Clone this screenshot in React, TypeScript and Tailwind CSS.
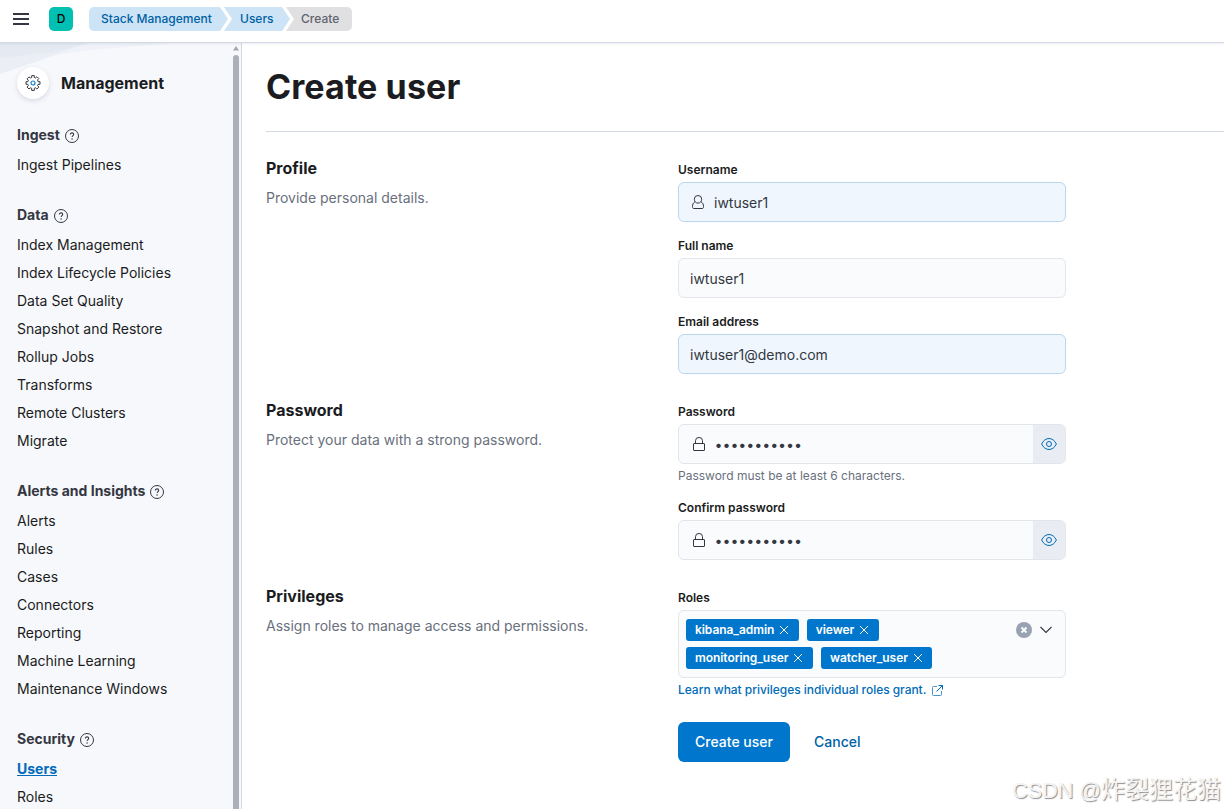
import type { ReactNode } from 'react'

const NAV = [
  { title: 'Ingest', items: ['Ingest Pipelines'] },
  {
    title: 'Data',
    items: [
      'Index Management',
      'Index Lifecycle Policies',
      'Data Set Quality',
      'Snapshot and Restore',
      'Rollup Jobs',
      'Transforms',
      'Remote Clusters',
      'Migrate',
    ],
  },
  {
    title: 'Alerts and Insights',
    items: ['Alerts', 'Rules', 'Cases', 'Connectors', 'Reporting', 'Machine Learning', 'Maintenance Windows'],
  },
  { title: 'Security', items: ['Users', 'Roles'] },
]

const ROLES = [
  ['kibana_admin', 'viewer'],
  ['monitoring_user', 'watcher_user'],
]

function HelpIcon() {
  return (
    <svg width="14" height="14" viewBox="0 0 14 14" fill="none" stroke="#343741" className="mt-[4px] shrink-0">
      <circle cx="7" cy="7" r="6.5" strokeWidth="1" />
      <path d="M5.3 5.6C5.3 4.5 6 3.9 7 3.9s1.7.6 1.7 1.5c0 1.2-1.6 1.3-1.6 2.6" strokeWidth="1.1" />
      <circle cx="7.05" cy="9.9" r=".75" fill="#343741" stroke="none" />
    </svg>
  )
}

function GearIcon() {
  return (
    <svg width="16" height="16" viewBox="0 0 16 16" fill="none">
      <path
        d="M6.7.6h2.6v1.8l1.3.5 1.3-1.2 1.9 1.9-1.2 1.3.5 1.8h1.9v2.6h-1.9l-.5 1.3 1.2 1.5-1.9 1.9-1.4-1.2-1.2.5v2.1H6.7v-2.1l-1.3-.5L4 14l-1.9-1.9 1.2-1.5-.5-1.3H1V6.700h1.800l.5-1.400-1.200-1.500L4 1.900 5.400 3l1.300-.5z"
        stroke="#343741"
      />
      <circle cx="8" cy="8" r="2" stroke="#0b83d9" strokeWidth="1.2" />
    </svg>
  )
}

function UserIcon() {
  return (
    <svg width="14" height="16" viewBox="0 0 14 16" fill="none" stroke="#343741">
      <path d="M3.300 5.200a3.700 3.700 0 0 1 7.400 0c0 2.300-1.600 3.900-3.700 3.900S3.300 7.500 3.300 5.200z" />
      <path d="M3.900 7.900C2.200 8.900 1.500 10.300 1.500 12.600c0 1.300.3 1.900 1 1.900h9c.7 0 1-.6 1-1.900 0-2.300-.7-3.700-2.400-4.700" />
    </svg>
  )
}

function LockIcon() {
  return (
    <svg width="14" height="16" viewBox="0 0 14 16" fill="none" stroke="#343741">
      <rect x="1.500" y="7.500" width="11" height="7" rx=".5" />
      <path d="M3.500 7.500V4.700A3.300 3.300 0 0 1 7 1.500a3.300 3.300 0 0 1 3.500 3.200v2.800" />
    </svg>
  )
}

function EyeIcon() {
  return (
    <svg width="16" height="16" viewBox="0 0 16 16" fill="none" stroke="#006bb8">
      <path d="M.6 8C2.300 4.500 5 2.500 8 2.500S13.700 4.500 15.400 8C13.700 11.500 11 13.500 8 13.500S2.300 11.500.6 8z" />
      <circle cx="8" cy="8" r="2.500" />
    </svg>
  )
}

function CrossIcon() {
  return (
    <svg width="10" height="10" viewBox="0 0 10 10" stroke="#ffffff" strokeWidth="1">
      <path d="M1 1l8 8M9 1L1 9" />
    </svg>
  )
}

function Header() {
  return (
    <header className="relative z-10 flex h-[43px] shrink-0 items-center border-b border-[#d3dae6] bg-white pb-[4px] pl-[13px] shadow-[0_1px_2px_rgba(90,110,150,0.12)]">
      <svg width="16" height="12" viewBox="0 0 16 12" fill="#343741">
        <path d="M0 0h16v2H0zM0 5h16v2H0zM0 10h16v2H0z" />
      </svg>
      <div className="ml-5 flex h-6 w-6 items-center justify-center rounded-[5px] bg-[#00bfb3] text-[12px] font-medium text-black">D</div>
      <nav className="ml-4 flex h-6 text-[12px] font-medium leading-6">
        <a className="w-[139px] rounded-l-[5px] bg-[#cce4f5] pl-3 text-[#0061a6] [clip-path:polygon(0_0,131px_0,100%_50%,131px_100%,0_100%)]">
          Stack Management
        </a>
        <a className="-ml-[4px] w-[66px] bg-[#cce4f5] pl-4 text-[#0061a6] [clip-path:polygon(0_0,58px_0,100%_50%,58px_100%,0_100%,8px_50%)]">
          Users
        </a>
        <span className="-ml-[4px] w-[66px] rounded-r-[5px] bg-[#e0e0e2] pl-[15px] text-[#5f636e] [clip-path:polygon(0_0,100%_0,100%_100%,0_100%,8px_50%)]">
          Create
        </span>
      </nav>
    </header>
  )
}

function Sidebar() {
  return (
    <aside className="relative flex w-[242px] shrink-0 overflow-hidden border-r border-[#d3dae6] bg-[#f7f8fc]">
      {/* folded-paper backdrop behind the title */}
      <svg className="absolute left-0 top-0" width="232" height="32" viewBox="0 0 232 32">
        <path d="M0 0H172L92 7L55 12L0 31z" fill="#eff2f8" />
        <path d="M0 0H88L55 12L0 31z" fill="#ebeef5" />
        <path d="M0 0H88L60 8L0 15z" fill="#e5e9f1" />
      </svg>
      <div className="relative flex-1 pl-[17px] pt-6">
        <div className="flex h-8 items-center gap-3">
          <div className="flex h-8 w-8 items-center justify-center rounded-full bg-white shadow-[0_2px_5px_rgba(60,70,100,0.16)]">
            <GearIcon />
          </div>
          <h2 className="text-[16px] font-bold text-[#1a1c21]">Management</h2>
        </div>
        <div className="mt-[21px] flex flex-col gap-[22px]">
          {NAV.map(section => (
            <section key={section.title}>
              <h3 className="flex h-[28px] items-center gap-[5px] text-[14px] font-bold text-[#343741]">
                {section.title} <HelpIcon />
              </h3>
              <ul className="pt-[2px] text-[14px] text-[#1a1c21]">
                {section.items.map(item => (
                  <li key={item} className="flex h-7 items-center whitespace-nowrap">
                    {item === 'Users' ? <a className="font-bold text-[#006bb8] underline">{item}</a> : <a>{item}</a>}
                  </li>
                ))}
              </ul>
            </section>
          ))}
        </div>
      </div>
      <div className="relative flex w-[9px] shrink-0 flex-col items-center pr-[2px]">
        <svg className="mt-[3px] shrink-0" width="6" height="5" viewBox="0 0 6 5" fill="#a5a8af">
          <path d="M3 0L6 4.500H0z" />
        </svg>
        <div className="mt-1 w-[6px] flex-1 rounded-t-[3px] bg-[#adb0b9]" />
      </div>
    </aside>
  )
}

function Group({ title, text, children }: { title: string; text: string; children: ReactNode }) {
  return (
    <section className="flex">
      <div className="w-[412px] shrink-0">
        <h3 className="text-[16px] font-bold leading-6 text-[#1a1c21]">{title}</h3>
        <p className="mt-[7px] text-[14px] leading-[21px] text-[#69707d]">{text}</p>
      </div>
      <div className="flex w-[388px] flex-col gap-4 pt-[6px]">{children}</div>
    </section>
  )
}

function Field({ label, help, children }: { label: string; help?: ReactNode; children: ReactNode }) {
  return (
    <div>
      <label className="block text-[12px] font-semibold leading-4 text-[#1a1c21]">{label}</label>
      <div className="mt-1">{children}</div>
      {help && <div className="mt-1 text-[12px] leading-4 text-[#69707d]">{help}</div>}
    </div>
  )
}

function TextBox({ value, icon, autofilled = false }: { value: string; icon?: ReactNode; autofilled?: boolean }) {
  return (
    <div
      className={`flex h-10 items-center rounded-[6px] border text-[14px] text-[#343741] ${
        autofilled ? 'border-[#b9d8ef] bg-[#eff6fd]' : 'border-[#e2e5ea] bg-[#fafbfd]'
      } ${icon ? 'gap-[9px] pl-3' : 'pl-[11px]'}`}
    >
      {icon}
      <span>{value}</span>
    </div>
  )
}

function PasswordBox() {
  return (
    <div className="flex h-10 items-center overflow-hidden rounded-[6px] border border-[#e2e5ea] bg-[#fafbfd] pl-[13px] text-[14px] text-[#343741]">
      <LockIcon />
      <span className="ml-[9px] flex-1 font-semibold tracking-[0.9px]">•••••••••••</span>
      <button className="flex h-full w-8 items-center justify-center bg-[#e9edf3]">
        <EyeIcon />
      </button>
    </div>
  )
}

function RolesBox() {
  return (
    <div className="flex h-[68px] justify-between rounded-[6px] border border-[#e2e5ea] bg-[#fafbfd] pl-[7px] pt-2">
      <div className="flex flex-col gap-[6px]">
        {ROLES.map((row, i) => (
          <div key={i} className="flex gap-2">
            {row.map(role => (
              <span key={role} className="flex h-[22px] items-center gap-[5px] rounded-[3px] bg-[#0077cc] pl-[9px] pr-[9.5px] text-[12px] font-semibold tracking-[-0.06px] text-white">
                {role}
                <CrossIcon />
              </span>
            ))}
          </div>
        ))}
      </div>
      <div className="flex h-[22px] items-center gap-2 pr-[13px]">
        <svg width="16" height="16" viewBox="0 0 16 16">
          <circle cx="8" cy="8" r="8" fill="#98a2b3" />
          <path d="M5.500 5.500l5 5M10.500 5.500l-5 5" stroke="#fff" strokeWidth="1.800" />
        </svg>
        <svg width="12" height="8" viewBox="0 0 12 8" fill="none" stroke="#343741" strokeWidth="1.100">
          <path d="M.5 1l5.500 5.500L11.500 1" />
        </svg>
      </div>
    </div>
  )
}

function CreateUserForm() {
  return (
    <main className="min-w-0 flex-1 bg-white pl-6">
      <div className="flex h-[89px] items-center border-b border-[#d3dae6]">
        <h1 className="text-[34px] font-bold leading-10 tracking-[0.1px] text-[#1a1c21]">Create user</h1>
      </div>
      <div className="mt-6 flex flex-col gap-6">
        <Group title="Profile" text="Provide personal details.">
          <Field label="Username">
            <TextBox value="iwtuser1" icon={<UserIcon />} autofilled />
          </Field>
          <Field label="Full name">
            <TextBox value="iwtuser1" />
          </Field>
          <Field label="Email address">
            <TextBox value="iwtuser1@demo.com" autofilled />
          </Field>
        </Group>
        <Group title="Password" text="Protect your data with a strong password.">
          <Field label="Password" help="Password must be at least 6 characters.">
            <PasswordBox />
          </Field>
          <Field label="Confirm password">
            <PasswordBox />
          </Field>
        </Group>
        <Group title="Privileges" text="Assign roles to manage access and permissions.">
          <Field
            label="Roles"
            help={
              <a className="flex items-center gap-[6px] font-medium tracking-[-0.04px] text-[#006bb8]">
                Learn what privileges individual roles grant.
                <svg className="mt-px" width="11" height="11" viewBox="0 0 11 11" fill="none" stroke="#4c93c8">
                  <path d="M5 1.500H1.500a1 1 0 0 0-1 1v7a1 1 0 0 0 1 1h7a1 1 0 0 0 1-1V6" />
                  <path d="M6.500.5h4v4M10.300.7L4.500 6.500" stroke="#006bb8" />
                </svg>
              </a>
            }
          >
            <RolesBox />
          </Field>
        </Group>
        <div className="flex items-center gap-6 pl-[412px] text-[14px] font-medium">
          <button className="h-10 w-[112px] rounded-[6px] bg-[#0077cc] pb-[2px] text-white">Create user</button>
          <a className="pb-[2px] text-[#0061a6]">Cancel</a>
        </div>
      </div>
    </main>
  )
}

export default function App() {
  return (
    <div className="relative flex h-[809px] w-[1224px] flex-col overflow-hidden bg-white font-['Inter',sans-serif]">
      <Header />
      <div className="flex min-h-0 flex-1">
        <Sidebar />
        <CreateUserForm />
      </div>
      <div className="absolute bottom-[1px] right-[3px] whitespace-nowrap font-['Liberation_Sans','Noto_Sans_CJK_SC',sans-serif] text-[24px] text-[#f4f4f4] [text-shadow:1px_1px_1px_#8f8f8f]">
        <span className="text-[21.5px]">CSDN @</span>炸裂狸花猫
      </div>
    </div>
  )
}
